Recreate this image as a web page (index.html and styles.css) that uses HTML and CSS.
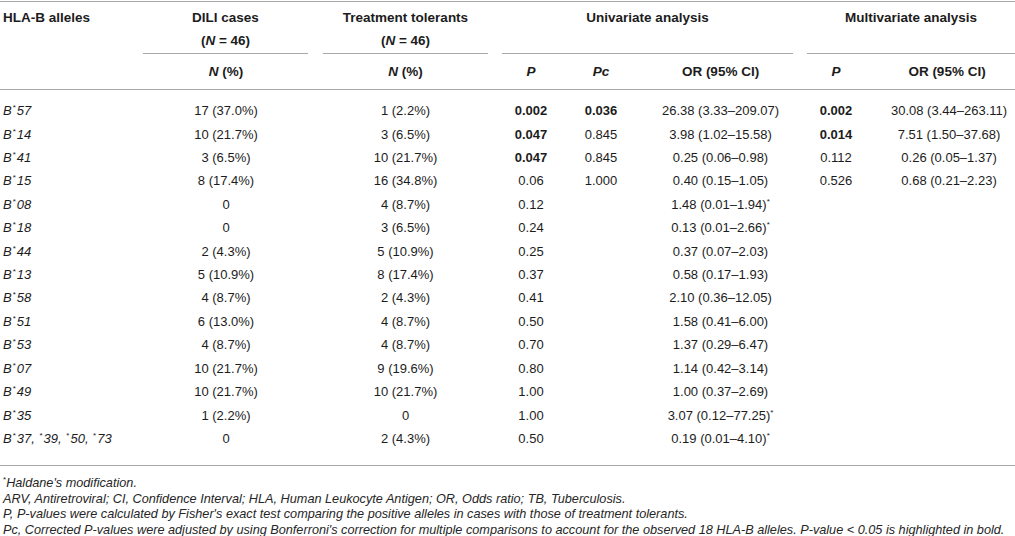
FILE: index.html
```html
<!DOCTYPE html>
<html>
<head>
<meta charset="utf-8">
<link rel="stylesheet" href="styles.css">
</head>
<body>
<div class="page">
<table class="t">
<colgroup>
<col class="w-allele"><col class="w-dili"><col class="w-tt"><col class="w-p"><col class="w-pc"><col class="w-or"><col class="w-mp"><col class="w-mor">
</colgroup>
<thead>
<tr class="h1">
<th class="lbl" rowspan="2">HLA-B alleles</th>
<th class="g"><div class="grp r15">DILI cases<br>(<i>N</i> = 46)</div></th>
<th class="g"><div class="grp r14">Treatment tolerants<br>(<i>N</i> = 46)</div></th>
<th class="g" colspan="3"><div class="grp r14">Univariate analysis<br>&nbsp;</div></th>
<th class="g" colspan="2"><div class="grp">Multivariate analysis<br>&nbsp;</div></th>
</tr>
<tr class="h2">
<th class="c-dili"><i>N</i> (%)</th>
<th class="c-tt"><i>N</i> (%)</th>
<th class="c-p"><i>P</i></th>
<th class="c-pc"><i>Pc</i></th>
<th class="c-or">OR (95% CI)</th>
<th class="c-mp"><i>P</i></th>
<th class="c-mor">OR (95% CI)</th>
</tr>
</thead>
<tbody>
<tr class="first"><td class="al"><i>B<sup>*</sup>57</i></td><td class="c-dili">17 (37.0%)</td><td class="c-tt">1 (2.2%)</td><td class="c-p"><b>0.002</b></td><td class="c-pc"><b>0.036</b></td><td class="c-or">26.38 (3.33–209.07)</td><td class="c-mp"><b>0.002</b></td><td class="c-mor">30.08 (3.44–263.11)</td></tr>
<tr><td class="al"><i>B<sup>*</sup>14</i></td><td class="c-dili">10 (21.7%)</td><td class="c-tt">3 (6.5%)</td><td class="c-p"><b>0.047</b></td><td class="c-pc">0.845</td><td class="c-or">3.98 (1.02–15.58)</td><td class="c-mp"><b>0.014</b></td><td class="c-mor">7.51 (1.50–37.68)</td></tr>
<tr><td class="al"><i>B<sup>*</sup>41</i></td><td class="c-dili">3 (6.5%)</td><td class="c-tt">10 (21.7%)</td><td class="c-p"><b>0.047</b></td><td class="c-pc">0.845</td><td class="c-or">0.25 (0.06–0.98)</td><td class="c-mp">0.112</td><td class="c-mor">0.26 (0.05–1.37)</td></tr>
<tr><td class="al"><i>B<sup>*</sup>15</i></td><td class="c-dili">8 (17.4%)</td><td class="c-tt">16 (34.8%)</td><td class="c-p">0.06</td><td class="c-pc">1.000</td><td class="c-or">0.40 (0.15–1.05)</td><td class="c-mp">0.526</td><td class="c-mor">0.68 (0.21–2.23)</td></tr>
<tr><td class="al"><i>B<sup>*</sup>08</i></td><td class="c-dili">0</td><td class="c-tt">4 (8.7%)</td><td class="c-p">0.12</td><td class="c-pc"></td><td class="c-or">1.48 (0.01–1.94)<sup>*</sup></td><td class="c-mp"></td><td class="c-mor"></td></tr>
<tr><td class="al"><i>B<sup>*</sup>18</i></td><td class="c-dili">0</td><td class="c-tt">3 (6.5%)</td><td class="c-p">0.24</td><td class="c-pc"></td><td class="c-or">0.13 (0.01–2.66)<sup>*</sup></td><td class="c-mp"></td><td class="c-mor"></td></tr>
<tr><td class="al"><i>B<sup>*</sup>44</i></td><td class="c-dili">2 (4.3%)</td><td class="c-tt">5 (10.9%)</td><td class="c-p">0.25</td><td class="c-pc"></td><td class="c-or">0.37 (0.07–2.03)</td><td class="c-mp"></td><td class="c-mor"></td></tr>
<tr><td class="al"><i>B<sup>*</sup>13</i></td><td class="c-dili">5 (10.9%)</td><td class="c-tt">8 (17.4%)</td><td class="c-p">0.37</td><td class="c-pc"></td><td class="c-or">0.58 (0.17–1.93)</td><td class="c-mp"></td><td class="c-mor"></td></tr>
<tr><td class="al"><i>B<sup>*</sup>58</i></td><td class="c-dili">4 (8.7%)</td><td class="c-tt">2 (4.3%)</td><td class="c-p">0.41</td><td class="c-pc"></td><td class="c-or">2.10 (0.36–12.05)</td><td class="c-mp"></td><td class="c-mor"></td></tr>
<tr><td class="al"><i>B<sup>*</sup>51</i></td><td class="c-dili">6 (13.0%)</td><td class="c-tt">4 (8.7%)</td><td class="c-p">0.50</td><td class="c-pc"></td><td class="c-or">1.58 (0.41–6.00)</td><td class="c-mp"></td><td class="c-mor"></td></tr>
<tr><td class="al"><i>B<sup>*</sup>53</i></td><td class="c-dili">4 (8.7%)</td><td class="c-tt">4 (8.7%)</td><td class="c-p">0.70</td><td class="c-pc"></td><td class="c-or">1.37 (0.29–6.47)</td><td class="c-mp"></td><td class="c-mor"></td></tr>
<tr><td class="al"><i>B<sup>*</sup>07</i></td><td class="c-dili">10 (21.7%)</td><td class="c-tt">9 (19.6%)</td><td class="c-p">0.80</td><td class="c-pc"></td><td class="c-or">1.14 (0.42–3.14)</td><td class="c-mp"></td><td class="c-mor"></td></tr>
<tr><td class="al"><i>B<sup>*</sup>49</i></td><td class="c-dili">10 (21.7%)</td><td class="c-tt">10 (21.7%)</td><td class="c-p">1.00</td><td class="c-pc"></td><td class="c-or">1.00 (0.37–2.69)</td><td class="c-mp"></td><td class="c-mor"></td></tr>
<tr><td class="al"><i>B<sup>*</sup>35</i></td><td class="c-dili">1 (2.2%)</td><td class="c-tt">0</td><td class="c-p">1.00</td><td class="c-pc"></td><td class="c-or">3.07 (0.12–77.25)<sup>*</sup></td><td class="c-mp"></td><td class="c-mor"></td></tr>
<tr class="last"><td class="al"><i>B<sup>*</sup>37, <sup>*</sup>39, <sup>*</sup>50, <sup>*</sup>73</i></td><td class="c-dili">0</td><td class="c-tt">2 (4.3%)</td><td class="c-p">0.50</td><td class="c-pc"></td><td class="c-or">0.19 (0.01–4.10)<sup>*</sup></td><td class="c-mp"></td><td class="c-mor"></td></tr>
</tbody>
</table>
<div class="foot">
<p><sup>*</sup>Haldane's modification.</p>
<p>ARV, Antiretroviral; CI, Confidence Interval; HLA, Human Leukocyte Antigen; OR, Odds ratio; TB, Tuberculosis.</p>
<p>P, P-values were calculated by Fisher's exact test comparing the positive alleles in cases with those of treatment tolerants.</p>
<p>Pc, Corrected P-values were adjusted by using Bonferroni's correction for multiple comparisons to account for the observed 18 HLA-B alleles. P-value &lt; 0.05 is highlighted in bold.</p>
</div>
</div>
</body>
</html>
```

FILE: styles.css
```css
html, body {
  margin: 0;
  padding: 0;
  background: #fff;
}
body {
  font-family: "Liberation Sans", Arial, sans-serif;
  color: #1c1c1c;
  font-size: 13px;
  overflow: hidden;
}
.page {
  width: 1015px;
  padding-top: 1px;
}
.t {
  width: 1015px;
  table-layout: fixed;
  border-collapse: separate;
  border-spacing: 0;
  border-top: 1px solid #a8a8a8;
}
.w-allele { width: 143px; }
.w-dili { width: 180px; }
.w-tt { width: 179px; }
.w-p { width: 58px; }
.w-pc { width: 82px; }
.w-or { width: 165px; }
.w-mp { width: 58px; }
.w-mor { width: 150px; }

th, td {
  padding: 0;
  line-height: 23.4px;
  text-align: center;
  white-space: nowrap;
}
th {
  font-weight: bold;
  font-size: 13.5px;
}
.h1 th {
  padding-top: 4px;
  vertical-align: top;
}
.lbl {
  text-align: left;
  padding-left: 3px;
  border-bottom: 1px solid #a8a8a8;
}
.grp {
  border-bottom: 1px solid #a8a8a8;
}
.r15 { margin-right: 15px; }
.r14 { margin-right: 14px; }
.h2 th {
  padding-top: 6px;
  padding-bottom: 6px;
  border-bottom: 1px solid #a8a8a8;
}
.c-dili, .c-tt { padding-right: 14px; }
.c-or { padding-right: 8px; }
.c-mor { padding-left: 14px; }
td.c-mor { padding-left: 18px; }
.al {
  text-align: left;
  padding-left: 3px;
}
sup {
  font-size: 8px;
  line-height: 0;
  vertical-align: 5px;
  font-style: normal;
}
.al sup {
  margin-left: 1px;
  margin-right: 1px;
}
tbody .first td { padding-top: 9px; }
tbody .last td { padding-bottom: 15px; }
.foot {
  border-top: 1px solid #a8a8a8;
  padding-top: 10px;
  padding-left: 3px;
  font-style: italic;
  font-size: 12.7px;
  color: #262626;
}
.foot p {
  margin: 0;
  line-height: 15.5px;
  white-space: nowrap;
}
```
